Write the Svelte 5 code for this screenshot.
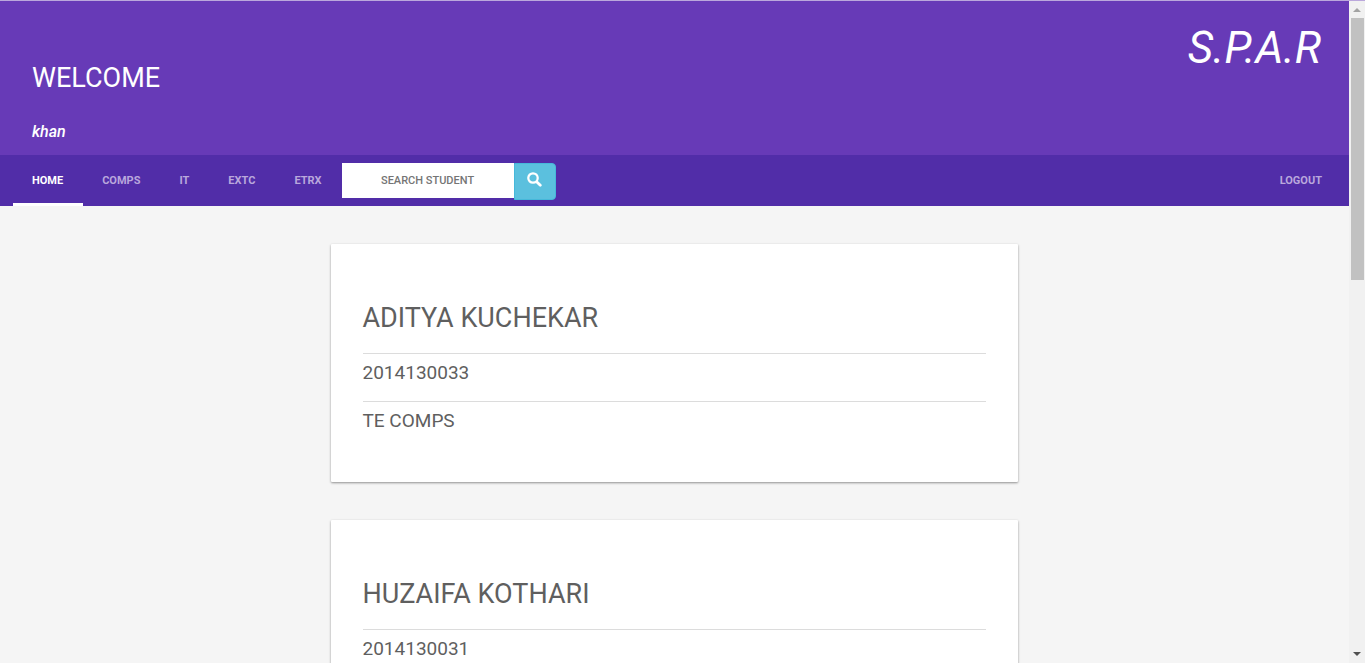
<script>
  const links = ['HOME', 'COMPS', 'IT', 'EXTC', 'ETRX'];
  const students = [
    { name: 'ADITYA KUCHEKAR', id: '2014130033', year: 'TE COMPS' },
    { name: 'HUZAIFA KOTHARI', id: '2014130031', year: 'TE COMPS' }
  ];
  let active = $state('HOME');
  let query = $state('');
</script>

<div class="window">
  <div class="page">
    <header>
      <div class="greeting">
        <h1>WELCOME</h1>
        <p>khan</p>
      </div>
      <div class="brand">S.P.A.R</div>
    </header>

    <nav>
      {#each links as link}
        <a href="#{link}" class:active={active === link} onclick={() => (active = link)}>{link}</a>
      {/each}
      <form onsubmit={(e) => e.preventDefault()}>
        <input type="text" placeholder="SEARCH STUDENT" aria-label="Search student" bind:value={query} />
        <button type="submit" aria-label="Search">
          <svg viewBox="0 0 14 14" width="15" height="15" fill="none" stroke="#fff">
            <circle cx="5.6" cy="5.6" r="4.4" stroke-width="2.1" />
            <path d="M9 9l3.4 3.4" stroke-width="2.6" stroke-linecap="round" />
          </svg>
        </button>
      </form>
      <a class="logout" href="#logout">LOGOUT</a>
    </nav>

    <main>
      {#each students as student}
        <article>
          <h2>{student.name}</h2>
          <p>{student.id}</p>
          <p>{student.year}</p>
        </article>
      {/each}
    </main>
  </div>

  <div class="scrollbar" aria-hidden="true">
    <svg class="arrow" viewBox="0 0 16 17" width="16" height="17"><path d="M4 11h8L8 7z" fill="#a3a3a3" /></svg>
    <div class="track"><div class="thumb"></div></div>
    <svg class="arrow" viewBox="0 0 16 17" width="16" height="17"><path d="M4 6h8l-4 4z" fill="#505050" /></svg>
  </div>
</div>

<style>
  :global(body) {
    margin: 0;
  }

  .window {
    box-sizing: border-box;
    display: flex;
    height: 100vh;
    overflow: hidden;
    border-top: 1px solid #bba8dc;
    background: #f5f5f5;
    font-family: Roboto, sans-serif;
    color: #5f5f5f;
  }

  .page {
    flex: 1;
    min-width: 0;
    overflow: hidden;
  }

  h1,
  h2,
  p {
    margin: 0;
    font-weight: 400;
  }

  header {
    display: flex;
    justify-content: space-between;
    align-items: flex-start;
    padding: 20px 28px 11px 32px;
    background: #673ab7;
    color: #fff;
  }

  .greeting {
    padding-top: 39px;
  }

  h1,
  h2 {
    font-size: 27px;
    line-height: 36px;
  }

  .greeting p {
    margin-top: 24px;
    font-size: 16px;
    font-style: italic;
    font-weight: 500;
    line-height: 24px;
  }

  .brand {
    font-size: 44px;
    font-style: italic;
    line-height: 54px;
  }

  nav {
    display: flex;
    height: 51px;
    padding: 0 7px 0 13px;
    background: #512da8;
  }

  nav a {
    box-sizing: border-box;
    height: 51px;
    padding: 0 20px 0 19px;
    border-bottom: 3px solid transparent;
    color: #b9a7dc;
    font-size: 11px;
    font-weight: 700;
    line-height: 51px;
    text-decoration: none;
  }

  nav a.active {
    border-color: #fff;
    color: #fff;
  }

  nav .logout {
    margin-left: auto;
  }

  form {
    display: flex;
    align-items: flex-start;
    padding-top: 8px;
  }

  input {
    box-sizing: border-box;
    width: 172px;
    height: 35px;
    padding: 0;
    border: 0;
    border-radius: 0;
    background: #fff;
    color: #555;
    font: 500 11px Roboto, sans-serif;
    text-align: center;
  }

  input::placeholder {
    color: #757575;
    opacity: 1;
  }

  button {
    display: flex;
    justify-content: center;
    box-sizing: border-box;
    width: 42px;
    height: 37px;
    padding: 8px 0 0;
    border: 1px solid #46b8da;
    border-radius: 0 4px 4px 0;
    background: #5bc0de;
  }

  main {
    display: flex;
    flex-direction: column;
    align-items: center;
    gap: 38px;
    padding: 38px 0;
  }

  article {
    box-sizing: border-box;
    width: 51%;
    padding: 56px 32px 33px;
    border-radius: 1px;
    background: #fff;
    box-shadow: 0 1px 3px rgba(0, 0, 0, 0.2), 0 1px 2px rgba(0, 0, 0, 0.24);
  }

  article h2 {
    padding-bottom: 17px;
  }

  article p {
    padding: 5px 0 15px;
    border-top: 1px solid #dcdcdc;
    font-size: 19px;
    line-height: 27px;
  }

  .scrollbar {
    display: flex;
    flex-direction: column;
    width: 16px;
    background: #f1f1f1;
  }

  .arrow {
    display: block;
    flex: none;
  }

  .track {
    flex: 1;
    padding: 0 1px 0 2px;
  }

  .thumb {
    height: calc(100% * 5 / 12);
    background: #c1c1c1;
  }
</style>
